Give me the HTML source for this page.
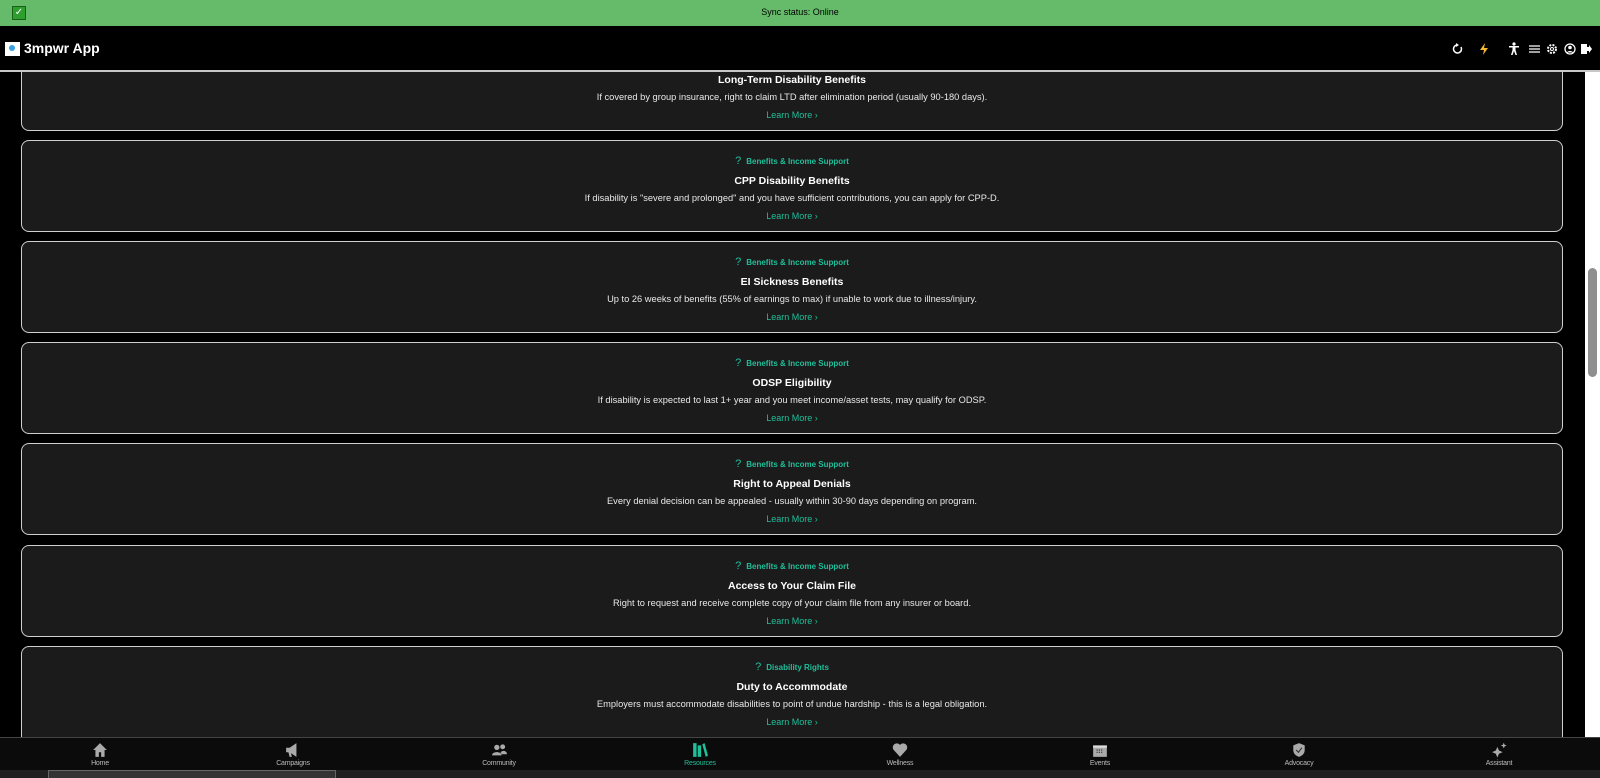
<!DOCTYPE html>
<html><head><meta charset="utf-8"><style>
*{margin:0;padding:0;box-sizing:border-box}
body{width:1600px;height:778px;overflow:hidden;background:#000;font-family:"Liberation Sans",sans-serif;position:relative;color:#fff}
.sync{position:absolute;left:0;top:0;width:1600px;height:26px;background:#66bb6a;color:#000;font-size:9px;text-align:center;line-height:25px;z-index:3}
.chk{position:absolute;left:12px;top:6px;width:14px;height:14px;background:#2e9e2e;border:1px solid #1a5f1a;color:#fff;font-size:10px;line-height:12px;text-align:center}
.hdr{position:absolute;top:26px;left:0;width:1600px;height:46px;background:#000;border-bottom:2px solid #c8c8c8;z-index:3}
.logo{position:absolute;left:5px;top:16px;width:15px;height:14px;background:#fff}
.logo:after{content:"";position:absolute;left:4px;top:3px;width:6px;height:6px;border-radius:50%;background:#3aa0e0}
.ttl{position:absolute;left:24px;top:14px;font-size:14px;font-weight:bold}
.hi{position:absolute;top:16px}
.card{position:absolute;left:21px;width:1542px;height:92px;background:#1b1b1b;border:1px solid #cfcfcf;border-radius:8px;text-align:center}
.cat{position:absolute;top:14px;left:0;right:0;font-size:8px;font-weight:bold;color:#1fbf9a}
.cat b{font-size:11px;font-weight:normal;margin-right:5px}
.t{position:absolute;top:34px;left:0;right:0;font-size:10.5px;font-weight:bold}
.d{position:absolute;top:52px;left:0;right:0;font-size:9.3px;color:#e8e8e8}
.l{position:absolute;top:70px;left:0;right:0;font-size:9px;color:#1fbf9a}
.sb{position:absolute;left:1585px;top:72px;width:15px;height:665px;background:#fff}
.th{position:absolute;left:3px;top:196px;width:9px;height:109px;border-radius:5px;background:#8f8f8f}
.nav{position:absolute;left:0;top:737px;width:1600px;height:33px;background:#0b0b0b;border-top:1px solid #444;z-index:3}
.ni{position:absolute;top:4px;width:200px;text-align:center;color:#bbb;font-size:7px;letter-spacing:-0.2px}
.ni svg{display:block;margin:0 auto 2px}
.task{position:absolute;left:0;top:770px;width:1600px;height:8px;background:#202020}
</style></head><body>
<div class="sync"><div class="chk">✓</div>Sync status: Online</div>
<div class="hdr"><div class="logo"></div><div class="ttl">3mpwr App</div>
<svg class="hi" style="left:1452px" width="12" height="14" viewBox="0 0 12 14"><path d="M9 5A4 4 0 1 1 5 3" stroke="#fff" stroke-width="1.5" fill="none"/><path d="M4 1l3 2-3 2z" fill="#fff"/></svg>
<svg class="hi" style="left:1479px" width="10" height="14" viewBox="0 0 10 14"><path d="M6 1L1 8h4l-1 5 5-7H5z" fill="#f5b82e"/></svg>
<svg class="hi" style="left:1508px" width="12" height="14" viewBox="0 0 12 14"><circle cx="6" cy="2" r="1.6" fill="#fff"/><path d="M1 4h10v1.5H7.5V8l1.5 5H7.5L6 9 4.5 13H3l1.5-5V5.5H1z" fill="#fff"/></svg>
<svg class="hi" style="left:1529px" width="11" height="14" viewBox="0 0 11 14"><path d="M0 4h11M0 7h11M0 10h11" stroke="#fff" stroke-width="1.3"/></svg>
<svg class="hi" style="left:1546px" width="12" height="14" viewBox="0 0 12 14"><circle cx="6" cy="7" r="4" stroke="#fff" stroke-width="2" stroke-dasharray="2 1.2" fill="none"/><circle cx="6" cy="7" r="1.5" stroke="#fff" fill="none"/></svg>
<svg class="hi" style="left:1564px" width="12" height="14" viewBox="0 0 12 14"><circle cx="6" cy="7" r="5" stroke="#fff" stroke-width="1.3" fill="none"/><circle cx="6" cy="5.5" r="1.8" fill="#fff"/><path d="M2.8 10.5c1-2 5.4-2 6.4 0" fill="#fff"/></svg>
<svg class="hi" style="left:1580px" width="12" height="14" viewBox="0 0 12 14"><path d="M1 2h6v10H1z" fill="#fff"/><path d="M7 5h2V3l3 4-3 4V9H7z" fill="#fff"/></svg>
</div>

<div class="card" style="top:62px;height:69px"><div class="t" style="top:11px">Long-Term Disability Benefits</div><div class="d" style="top:29px">If covered by group insurance, right to claim LTD after elimination period (usually 90-180 days).</div><div class="l" style="top:47px">Learn More ›</div></div>

<div class="card" style="top:140px"><div class="cat"><b>?</b>Benefits &amp; Income Support</div><div class="t">CPP Disability Benefits</div><div class="d">If disability is "severe and prolonged" and you have sufficient contributions, you can apply for CPP-D.</div><div class="l">Learn More ›</div></div>
<div class="card" style="top:241px"><div class="cat"><b>?</b>Benefits &amp; Income Support</div><div class="t">EI Sickness Benefits</div><div class="d">Up to 26 weeks of benefits (55% of earnings to max) if unable to work due to illness/injury.</div><div class="l">Learn More ›</div></div>
<div class="card" style="top:342px"><div class="cat"><b>?</b>Benefits &amp; Income Support</div><div class="t">ODSP Eligibility</div><div class="d">If disability is expected to last 1+ year and you meet income/asset tests, may qualify for ODSP.</div><div class="l">Learn More ›</div></div>
<div class="card" style="top:443px"><div class="cat"><b>?</b>Benefits &amp; Income Support</div><div class="t">Right to Appeal Denials</div><div class="d">Every denial decision can be appealed - usually within 30-90 days depending on program.</div><div class="l">Learn More ›</div></div>
<div class="card" style="top:545px"><div class="cat"><b>?</b>Benefits &amp; Income Support</div><div class="t">Access to Your Claim File</div><div class="d">Right to request and receive complete copy of your claim file from any insurer or board.</div><div class="l">Learn More ›</div></div>
<div class="card" style="top:646px;height:100px"><div class="cat"><b>?</b>Disability Rights</div><div class="t">Duty to Accommodate</div><div class="d">Employers must accommodate disabilities to point of undue hardship - this is a legal obligation.</div><div class="l">Learn More ›</div></div>

<div class="sb"><div class="th"></div></div>

<div class="nav">
<div class="ni" style="left:0"><svg width="16" height="16" viewBox="0 0 14 14"><path d="M7 1L1 7h2v6h3V9h2v4h3V7h2z" fill="#aaa"/></svg>Home</div>
<div class="ni" style="left:193px"><svg width="16" height="16" viewBox="0 0 14 14"><path d="M1 5h3l6-4v12L4 9H1z M3 9h2l1 4H4z" fill="#aaa"/></svg>Campaigns</div>
<div class="ni" style="left:399px"><svg width="17" height="16" viewBox="0 0 16 14"><circle cx="5.5" cy="4.5" r="2.5" fill="#aaa"/><circle cx="11" cy="4" r="2.3" fill="#aaa"/><path d="M1 12c0-4 9-4 9 0zM9 9c2-2 6-1.5 6 2H10z" fill="#aaa"/></svg>Community</div>
<div class="ni" style="left:600px;color:#1fbf9a"><svg width="16" height="16" viewBox="0 0 14 14"><path d="M1 1h3v12H1zM5 3h3v10H5zM9 2l2-1 3 11-2 1z" fill="#1fbf9a"/></svg>Resources</div>
<div class="ni" style="left:800px"><svg width="16" height="16" viewBox="0 0 14 14"><path d="M7 13L1.5 7A3.3 3.3 0 0 1 7 2.5 3.3 3.3 0 0 1 12.5 7z" fill="#aaa"/></svg>Wellness</div>
<div class="ni" style="left:1000px"><svg width="16" height="16" viewBox="0 0 14 14"><path d="M1 3h12v10H1z" fill="#aaa"/><path d="M1 3h12v2H1z" fill="#ddd"/><path d="M4 7h1M6 7h1M8 7h1M4 9h1M6 9h1M8 9h1" stroke="#333"/></svg>Events</div>
<div class="ni" style="left:1199px"><svg width="16" height="16" viewBox="0 0 14 14"><path d="M7 1l5 2v4c0 3-2 5-5 6-3-1-5-3-5-6V3z" fill="#aaa"/><path d="M4.5 7l2 2 3-4" stroke="#333" fill="none"/></svg>Advocacy</div>
<div class="ni" style="left:1399px"><svg width="17" height="16" viewBox="0 0 16 14"><path d="M6 4l1.5 3.5L11 9l-3.5 1.5L6 14 4.5 10.5 1 9l3.5-1.5zM12 0l.8 2 2 .8-2 .8L12 5.6 11.2 3.6 9.2 2.8l2-.8z" fill="#aaa"/></svg>Assistant</div>
</div>
<div class="task"><div style="position:absolute;left:48px;top:0;width:288px;height:8px;background:#333;border:1px solid #666;border-bottom:none"></div></div>
</body></html>
